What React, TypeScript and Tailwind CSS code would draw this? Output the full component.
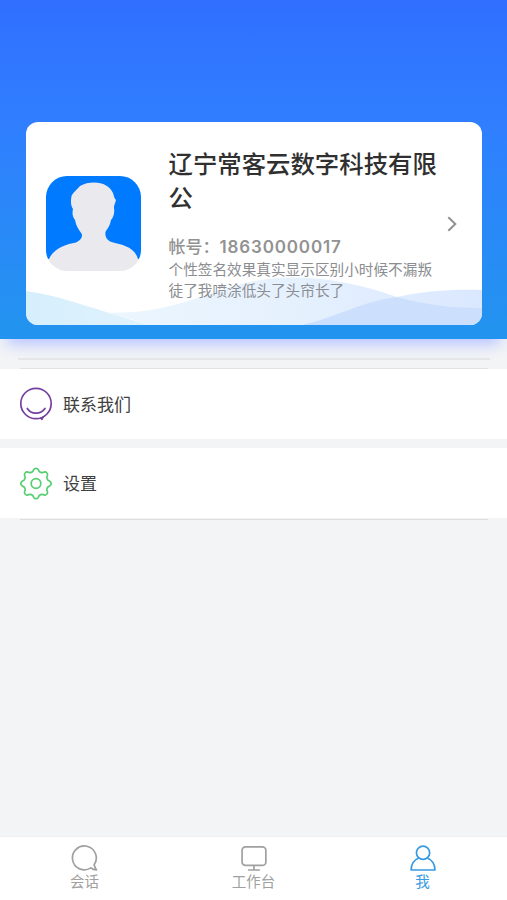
import {ReactNode} from "react";

interface Tab {
    name: string
    icon: ReactNode
    active?: boolean
}

const tabs: Tab[] = [
    {
        name: '会话',
        icon: <path d="M19.6 22.9A11.9 11.9 0 1 1 22.9 19.7C23.400 21.700 24.100 23.500 25.200 25C23.200 24.900 21.200 24.200 19.600 22.900Z"/>,
    },
    {
        name: '工作台',
        icon: <>
            <rect x="1.8" y="1.8" width="23.8" height="18.6" rx="3.5"/>
            <path d="M13.7 20.4V25M7.8 25H19.6"/>
        </>,
    },
    {
        name: '我',
        active: true,
        icon: <>
            <circle cx="13.8" cy="7.8" r="6.6"/>
            <path d="M9.500 13C4.800 15 1.900 19.300 1.900 25H25.700C25.700 19.300 22.800 15 18.100 13"/>
        </>,
    },
]

/* 톱니 8개짜리 설정 아이콘 외곽선 */
const gearPath = (() => {
    const at = (degree: number) => {
        const rad = degree * Math.PI / 180
        return `${(17 + 14 * Math.cos(rad)).toFixed(2)} ${(17 + 14 * Math.sin(rad)).toFixed(2)}`
    }
    let path = `M${at(-9.5)}`
    for (let i = 0; i < 8; i++) {
        path += `A2.6 2.6 0 0 1 ${at(i * 45 + 9.5)}`
        path += `A3.9 3.9 0 0 0 ${at(i * 45 + 35.5)}`
    }
    return path + 'Z'
})()

function Avatar() {
    return (
        <svg viewBox="0 0 95 95" className="h-[95px] w-[95px] shrink-0">
            <defs>
                <linearGradient id="avatarBg" x2="0" y2="1">
                    <stop offset=".87" stopColor="#007aff"/>
                    <stop offset=".87" stopColor="#e9e9ee"/>
                </linearGradient>
            </defs>
            <rect width="95" height="95" rx="21" fill="url(#avatarBg)"/>
            <path
                fill="#e9e9ee"
                d="M48 6.500C57 6.500 64 10.500 67 17C68 20 68 22 70 24C69 28 68 29 68 32C69 37 67 42 65 44C64 50 61 53 59.500 56C59 60 60 63 64 65.500C76 69 88 70 92 83L89 88H6L3 83C7 73 20 68 30 66.500C35 64 37 61 35.500 57.500C33 54 30 50 29 44C26.500 41 26 37 27 33C24 28 25 24 25.500 20C28 15 31 14 34 10C38 7.500 43 6.500 48 6.500Z"
            />
        </svg>
    )
}

function CardWaves() {
    return (
        <svg viewBox="0 0 456 56" className="absolute bottom-0 left-0 h-[56px] w-[456px]">
            <defs>
                <linearGradient id="waveLeft">
                    <stop offset="0" stopColor="#d5effc"/>
                    <stop offset="1" stopColor="#e0f2fd"/>
                </linearGradient>
                <linearGradient id="waveMiddle">
                    <stop offset="0" stopColor="#ecf6fe"/>
                    <stop offset=".55" stopColor="#e5f0fe"/>
                    <stop offset="1" stopColor="#dae8ff"/>
                </linearGradient>
            </defs>
            <path fill="url(#waveLeft)" d="M0 22C32 26 65 39 90 46C103 50 113 53 124 56H0Z"/>
            <path fill="url(#waveMiddle)" d="M78 43.500C137 46 170 28 215 15C270 1 325 12 371 28C398 22 425 20 456 21V56H124C110 51 94 47 78 43.500Z"/>
            <path fill="#cce0fe" d="M276 56C308 49 337 32 371 28C400 36 427 39 456 39V56Z"/>
        </svg>
    )
}

function ProfileCard() {
    return (
        <div className="relative flex h-[202.500px] w-[456px] overflow-hidden rounded-[12px] bg-white">
            <CardWaves/>
            <div className="relative pl-[20px] pt-[54px]">
                <Avatar/>
            </div>
            <div className="relative ml-[27.500px] w-[270px] pt-[25px]">
                <h1 className="whitespace-nowrap text-[24.4px] font-medium leading-[34px] text-[#303030]">
                    辽宁常客云数字科技有限<br/>公
                </h1>
                <p className="mt-[21px] whitespace-nowrap text-[17px] font-semibold leading-[22px] text-[#929292]">
                    <span className="font-medium">帐号：</span><span className="tracking-[0.85px]">18630000017</span>
                </p>
                <p className="mt-[2px] whitespace-nowrap text-[14.65px] leading-[21px] text-[#8b8d91]">
                    个性签名效果真实显示区别小时候不漏叛<br/>徒了我喷涂低头了头帘长了
                </p>
            </div>
            <svg viewBox="0 0 10 16" className="relative ml-[8.500px] mt-[94px] h-4 w-2.5" fill="none" stroke="#929292" strokeWidth="2">
                <path d="M1.300 1.200L8.300 8L1.300 14.800"/>
            </svg>
        </div>
    )
}

function MenuRow({icon, label}: {icon: ReactNode, label: string}) {
    return (
        <div className="flex h-[70px] shrink-0 items-center bg-white pl-[19px]">
            <svg viewBox="0 0 34 34" className="h-[34px] w-[34px]" fill="none" strokeLinecap="round" strokeLinejoin="round">
                {icon}
            </svg>
            <span className="ml-[10px] pt-[2px] text-[17px] leading-6 text-[#404040]">{label}</span>
        </div>
    )
}

function App() {
    return (
        <div className="flex h-[900px] w-[507px] flex-col overflow-hidden bg-[#f2f4f6] font-[Inter,'Noto_Sans_CJK_SC',sans-serif]">

            <header className="flex h-[338.500px] shrink-0 justify-center bg-linear-to-b from-[#306fff] via-[#307eff] via-35% to-[#2294ef] pl-[1px] pt-[122px] shadow-[0_12px_14px_-7px_#b5c2ff]">
                <ProfileCard/>
            </header>

            <div className="flex h-[30.500px] shrink-0 flex-col justify-end">
                <div className="ml-[18px] mr-[17px] h-[2px] bg-[#e4e6e7]"/>
                <div className="ml-[20px] mr-[19px] mt-[8px] h-px bg-[#e0e2e3]"/>
            </div>

            <MenuRow
                label="联系我们"
                icon={<g stroke="#7440a0" strokeWidth="1.7">
                    <circle cx="17" cy="16.500" r="15.200"/>
                    <path d="M8.300 21.500C12 27.500 21.500 27.800 26 21.500"/>
                    <path d="M21.800 31.200L22.800 32.300L24.200 29.800"/>
                </g>}
            />
            <div className="h-[9px] shrink-0"/>
            <MenuRow
                label="设置"
                icon={<g stroke="#55cf70" strokeWidth="1.7">
                    <path d={gearPath} transform="translate(0 .5)"/>
                    <circle cx="17" cy="17.500" r="4.800"/>
                </g>}
            />
            <div className="ml-[20px] mr-[19px] mt-[1px] h-px shrink-0 bg-[#dcdee0]"/>

            <nav className="mt-auto flex h-[64px] shrink-0 border-t border-[#eff0f1] bg-white">
                {tabs.map(tab => (
                    <div
                        key={tab.name}
                        className={`flex flex-1 flex-col items-center pt-[8px] ${tab.active ? 'text-[#389ae3]' : 'text-[#a0a0a0]'}`}
                    >
                        <svg viewBox="0 0 27.500 27" className="h-[27px] w-[28px]" fill="none" stroke="currentColor" strokeWidth="1.700" strokeLinejoin="round">
                            {tab.icon}
                        </svg>
                        <span className="mt-[1px] text-[14.500px] leading-[18px]">{tab.name}</span>
                    </div>
                ))}
            </nav>
        </div>
    );
}

export default App;
